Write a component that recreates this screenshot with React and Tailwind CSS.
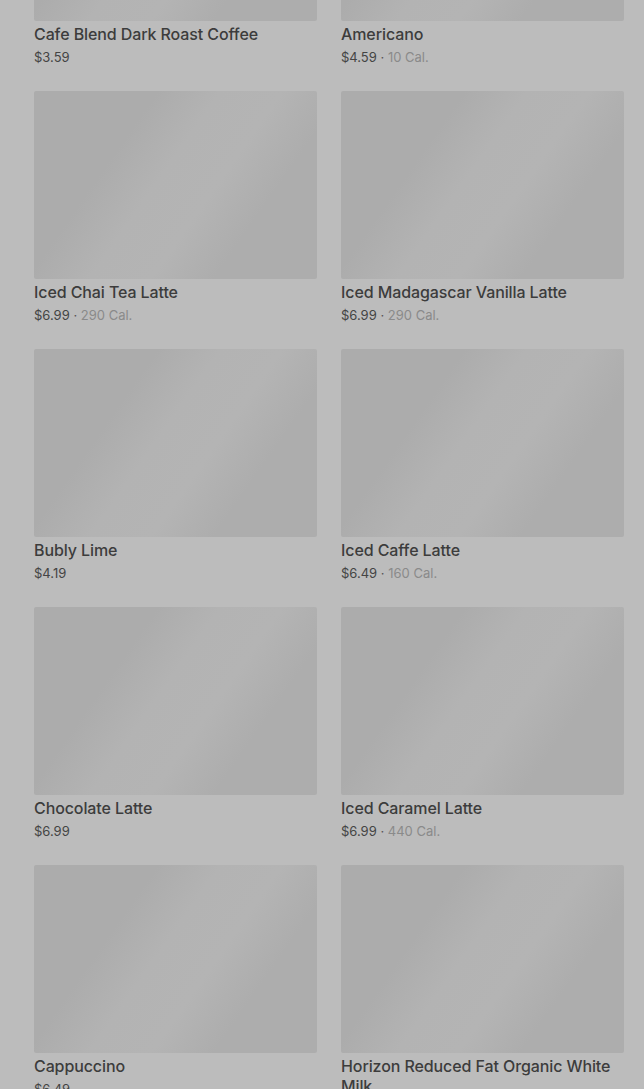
const items = [
  { name: "Cafe Blend Dark Roast Coffee", price: "$3.59" },
  { name: "Americano", price: "$4.59", cal: "10 Cal." },
  { name: "Iced Chai Tea Latte", price: "$6.99", cal: "290 Cal." },
  { name: "Iced Madagascar Vanilla Latte", price: "$6.99", cal: "290 Cal." },
  { name: "Bubly Lime", price: "$4.19" },
  { name: "Iced Caffe Latte", price: "$6.49", cal: "160 Cal." },
  { name: "Chocolate Latte", price: "$6.99" },
  { name: "Iced Caramel Latte", price: "$6.99", cal: "440 Cal." },
  { name: "Cappuccino", price: "$6.49" },
  { name: "Horizon Reduced Fat Organic White Milk", price: "$3.29" },
];

export default function App() {
  return (
    <div
      className="w-[644px] h-[1089px] overflow-hidden bg-[#bcbcbc]"
      style={{ fontFamily: "Inter, 'Noto Sans', sans-serif" }}
    >
      <div className="grid grid-cols-2 gap-x-[24px] gap-y-[24px] pl-[34px] pr-[20px] -mt-[167px]">
        {items.map((it) => (
          <div key={it.name} className="flex flex-col">
            <div className="h-[188px] rounded-[2px] bg-[linear-gradient(125deg,#acacac_30%,#b3b3b3_45%,#b4b4b4_60%,#adadad_75%)]" />
            <div className="mt-[3px] text-[16px] leading-[20px] font-medium text-[#3c3c3c] tracking-[-0.1px]">
              {it.name}
            </div>
            <div className="mt-[3px] text-[13px] leading-[20px] text-[#444]">
              {it.price}
              {it.cal && (
                <>
                  <span className="text-[#555]"> · </span>
                  <span className="text-[#8a8a8a]">{it.cal}</span>
                </>
              )}
            </div>
          </div>
        ))}
      </div>
    </div>
  );
}
